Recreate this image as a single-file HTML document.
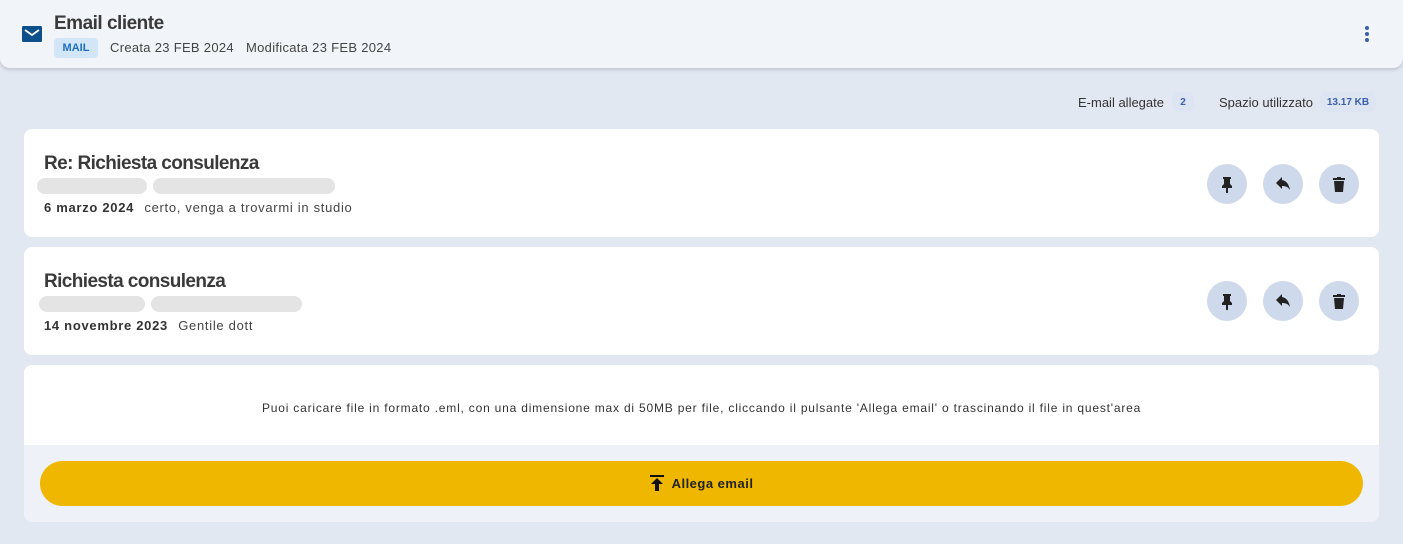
<!DOCTYPE html>
<html><head><meta charset="utf-8"><style>
*{box-sizing:border-box;margin:0;padding:0}
body{width:1403px;height:544px;background:#e2e8f2;font-family:"Liberation Sans",sans-serif;position:relative;overflow:hidden;color:#333}
.hdr{position:absolute;left:0;top:0;width:1403px;height:68px;background:#f1f4f9;border-radius:0 0 10px 10px;box-shadow:0 2px 3px rgba(0,0,0,.15)}
.title{position:absolute;left:54px;top:13px;font-size:19px;font-weight:bold;color:#3a3a3a;letter-spacing:-0.5px}
.tag{position:absolute;left:54px;top:38px;width:44px;height:20px;background:#d3e6f8;border-radius:4px;color:#1c6fc0;font-size:11px;font-weight:bold;text-align:center;line-height:20px}
.meta{position:absolute;top:40px;font-size:13px;color:#444;letter-spacing:0.3px}
.card{position:absolute;left:24px;width:1355px;background:#fff;border-radius:8px}
.card h2{position:absolute;left:20px;font-size:19px;font-weight:bold;color:#3a3a3a;letter-spacing:-0.6px}
.blur{position:absolute;height:16px;background:#e4e4e4;border-radius:8px}
.line{position:absolute;left:20px;font-size:13px;color:#444;letter-spacing:0.7px}
.line b{color:#333;margin-right:6px}
.btn{position:absolute;width:40px;height:40px;border-radius:50%;background:#cfd9ec}
.btn svg{position:absolute;left:10px;top:10px}
.small{position:absolute;top:95px;font-size:13px;color:#333}
.pill{position:absolute;top:92px;height:20px;background:#dde5f2;border-radius:6px;color:#3b5fa8;font-size:10px;font-weight:bold;line-height:22px;text-align:center}
</style></head><body>
<div class="hdr">
<svg style="position:absolute;left:22px;top:26px" width="20" height="16" viewBox="0 0 20 16"><rect width="20" height="16" rx="1.5" fill="#0d4f8b"/><path d="M3 4l7 5 7-5" stroke="#fff" stroke-width="1.8" fill="none"/></svg>
<div class="title">Email cliente</div>
<div class="tag">MAIL</div>
<div class="meta" style="left:110px">Creata 23 FEB 2024</div>
<div class="meta" style="left:246px">Modificata 23 FEB 2024</div>
<svg style="position:absolute;left:1364px;top:26px" width="6" height="16"><circle cx="3" cy="2" r="2" fill="#3b5fa8"/><circle cx="3" cy="8" r="2" fill="#3b5fa8"/><circle cx="3" cy="14" r="2" fill="#3b5fa8"/></svg>
</div>
<div class="small" style="left:1078px">E-mail allegate</div>
<div class="pill" style="left:1172px;width:22px">2</div>
<div class="small" style="left:1219px">Spazio utilizzato</div>
<div class="pill" style="left:1320px;width:56px">13.17 KB</div>

<div class="card" style="top:129px;height:108px">
<h2 style="top:24px">Re: Richiesta consulenza</h2>
<div class="blur" style="left:13px;top:49px;width:110px"></div>
<div class="blur" style="left:129px;top:49px;width:182px"></div>
<div class="line" style="top:71px"><b>6 marzo 2024</b> certo, venga a trovarmi in studio</div>
</div>
<div class="card" style="top:247px;height:108px">
<h2 style="top:24px">Richiesta consulenza</h2>
<div class="blur" style="left:15px;top:49px;width:106px"></div>
<div class="blur" style="left:127px;top:49px;width:151px"></div>
<div class="line" style="top:71px"><b>14 novembre 2023</b> Gentile dott</div>
</div>
<div class="card" style="top:365px;height:157px;background:#eef2f8">
<div style="position:absolute;left:0;top:0;width:1355px;height:80px;background:#fff;border-radius:8px 8px 0 0"></div>
<div style="position:absolute;left:0;top:36px;width:1355px;text-align:center;font-size:12px;color:#333;letter-spacing:0.8px">Puoi caricare file in formato .eml, con una dimensione max di 50MB per file, cliccando il pulsante 'Allega email' o trascinando il file in quest'area</div>
<div style="position:absolute;left:16px;top:96px;width:1323px;height:45px;background:#efb700;border-radius:23px;text-align:center;line-height:45px;font-size:13px;font-weight:bold;color:#222;letter-spacing:0.5px">
<svg width="14" height="16" viewBox="0 0 14 16" style="vertical-align:-3px;margin-right:8px"><rect x="0" y="0" width="14" height="2" fill="#111"/><path d="M7 3l6 6H9v7H5V9H1z" fill="#111"/></svg>Allega email</div>
</div>

<div style="position:absolute;left:1207px;top:164px" class="btn"><svg width="20" height="20" viewBox="0 0 20 20"><path d="M6 3h8v2h-1v5l2 2v2h-4v5h-2v-5H5v-2l2-2V5H6z" fill="#222"/></svg></div>
<div style="position:absolute;left:1263px;top:164px" class="btn"><svg width="20" height="20" viewBox="0 0 20 20"><path d="M9 6V3L3 9l6 6v-3c4 0 6 1 8 4-1-5-3-9-8-10z" fill="#222"/></svg></div>
<div style="position:absolute;left:1319px;top:164px" class="btn"><svg width="20" height="20" viewBox="0 0 20 20"><path d="M4 4h12v2H4zM8 3h4v1H8zM5 7h10l-1 11H6z" fill="#222"/></svg></div>
<div style="position:absolute;left:1207px;top:281px" class="btn"><svg width="20" height="20" viewBox="0 0 20 20"><path d="M6 3h8v2h-1v5l2 2v2h-4v5h-2v-5H5v-2l2-2V5H6z" fill="#222"/></svg></div>
<div style="position:absolute;left:1263px;top:281px" class="btn"><svg width="20" height="20" viewBox="0 0 20 20"><path d="M9 6V3L3 9l6 6v-3c4 0 6 1 8 4-1-5-3-9-8-10z" fill="#222"/></svg></div>
<div style="position:absolute;left:1319px;top:281px" class="btn"><svg width="20" height="20" viewBox="0 0 20 20"><path d="M4 4h12v2H4zM8 3h4v1H8zM5 7h10l-1 11H6z" fill="#222"/></svg></div>
</body></html>
